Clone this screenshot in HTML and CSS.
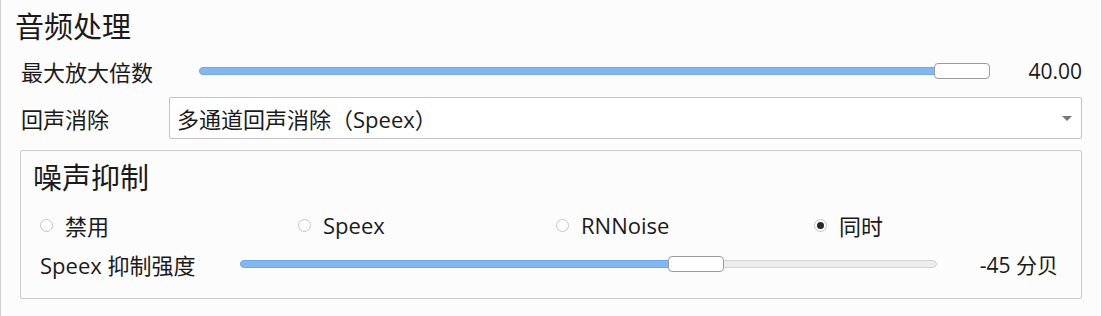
FILE: index.html
```html
<!DOCTYPE html>
<html lang="zh-CN">
<head>
<meta charset="utf-8">
<title>音频处理</title>
<link rel="stylesheet" href="styles.css">
</head>
<body>
<div class="panel">
  <div class="title">音频处理</div>
  <div class="row row-gain">
    <div class="label label-gain">最大放大倍数</div>
    <div class="slider slider-gain">
      <div class="fill" style="width:100%"></div>
      <div class="track-rest"></div>
      <div class="thumb thumb-end"></div>
    </div>
    <div class="value value-gain">40.00</div>
  </div>
  <div class="row row-echo">
    <div class="label label-echo">回声消除</div>
    <div class="select">
      <span class="select-text">多通道回声消除<span class="punct">（</span>Speex<span class="punct">）</span></span>
      <span class="caret"></span>
    </div>
  </div>
  <div class="group">
    <div class="group-title">噪声抑制</div>
    <div class="radios">
      <div class="radio"><span class="dot"></span><span class="rtext">禁用</span></div>
      <div class="radio"><span class="dot"></span><span class="rtext">Speex</span></div>
      <div class="radio"><span class="dot"></span><span class="rtext">RNNoise</span></div>
      <div class="radio"><span class="dot checked"></span><span class="rtext">同时</span></div>
    </div>
    <div class="row row-speex">
      <div class="label label-speex">Speex 抑制强度</div>
      <div class="slider slider-speex">
        <div class="fill" style="width:61.5%"></div>
        <div class="track-rest"></div>
        <div class="thumb thumb-mid"></div>
      </div>
      <div class="value value-speex">-45 分贝</div>
    </div>
  </div>
</div>
</body>
</html>
```
FILE: styles.css
```css
html, body {
  margin: 0;
  padding: 0;
  background: #fcfcfc;
}
body {
  font-family: "Open Sans", "Noto Sans CJK SC", sans-serif;
  color: #1a1a1a;
  text-spacing-trim: space-all;
}
.panel {
  box-sizing: border-box;
  width: 1102px;
  height: 316px;
  border-left: 1px solid #cfcfcf;
  border-right: 1px solid #cfcfcf;
  padding: 7px 19px 0 14px;
  overflow: hidden;
}
.title {
  font-size: 29px;
  line-height: 40px;
  height: 40px;
}
.row {
  display: flex;
  align-items: center;
}
.label {
  font-size: 22px;
  white-space: nowrap;
  flex: none;
}
.row-gain {
  height: 32px;
  margin-top: 8px;
  padding-left: 6px;
}
.label-gain { width: 178px; }
.slider {
  position: relative;
  height: 16px;
  flex: none;
}
.slider .fill {
  position: absolute;
  left: 0;
  top: 4px;
  height: 8px;
  box-sizing: border-box;
  background: #80b8f6;
  border: 1px solid #74a9e6;
  border-radius: 4px 0 0 4px;
  z-index: 1;
}
.slider .track-rest {
  position: absolute;
  left: 0;
  right: 0;
  top: 4px;
  height: 8px;
  box-sizing: border-box;
  background: #ececec;
  border: 1px solid #d4d4d4;
  border-radius: 4px;
  z-index: 0;
}
.slider .thumb {
  position: absolute;
  top: 0;
  box-sizing: border-box;
  width: 56px;
  height: 16px;
  background: #ffffff;
  border: 1px solid #9c9c9c;
  border-radius: 4px;
  z-index: 2;
}
.slider-gain { width: 791px; }
.thumb-end { right: 0; }
.value {
  font-size: 21px;
  text-align: right;
  flex: 1;
  white-space: nowrap;
}
.row-echo {
  height: 42px;
  margin-top: 10px;
  padding-left: 6px;
}
.label-echo { width: 148px; }
.select {
  flex: 1;
  height: 42px;
  box-sizing: border-box;
  border: 1px solid #c4c4c4;
  border-radius: 2px;
  background: #ffffff;
  display: flex;
  align-items: center;
  padding: 0 9px 0 7px;
}
.select-text {
  flex: 1;
  font-size: 22px;
}
.punct {
  display: inline-block;
  width: 1em;
  text-align: center;
  font-family: "Noto Sans CJK SC", sans-serif;
}
.caret {
  width: 0;
  height: 0;
  border-left: 5px solid transparent;
  border-right: 5px solid transparent;
  border-top: 5px solid #777777;
}
.group {
  margin: 11px 0 0 5px;
  height: 149px;
  box-sizing: border-box;
  border: 1px solid #cccccc;
  border-radius: 2px;
  padding: 9px 0 0 12px;
}
.group-title {
  font-size: 29px;
  line-height: 36px;
  height: 36px;
}
.radios {
  display: grid;
  grid-template-columns: repeat(4, 258px);
  height: 28px;
  margin-top: 13px;
  padding-left: 7px;
  align-items: center;
}
.radio {
  display: flex;
  align-items: center;
  font-size: 22px;
}
.dot {
  box-sizing: border-box;
  width: 13px;
  height: 13px;
  border: 1px solid #c6c6c6;
  border-radius: 50%;
  background: #ffffff;
  margin-right: 12px;
  display: flex;
  align-items: center;
  justify-content: center;
  flex: none;
}
.dot.checked::after {
  content: "";
  width: 7px;
  height: 7px;
  border-radius: 50%;
  background: #2a2a2a;
}
.row-speex {
  height: 26px;
  margin-top: 14px;
  padding-left: 7px;
  padding-right: 23px;
}
.label-speex { width: 200px; }
.slider-speex { width: 697px; }
.thumb-mid { left: 428px; width: 55px; }
```
